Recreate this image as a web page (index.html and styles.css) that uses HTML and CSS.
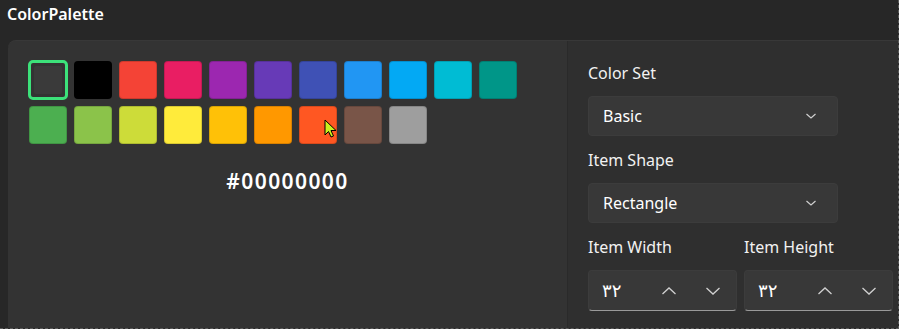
FILE: index.html
```html
<!DOCTYPE html>
<html lang="en">
<head>
    <meta charset="UTF-8">
    <title>ColorPalette</title>
    <link rel="stylesheet" href="styles.css">
</head>
<body>
    <div class="page">
        <div class="title">ColorPalette</div>
        <div class="card">
            <div class="left">
                <div class="swatches">
                    <div class="item selected"><span class="sw" style="background:#3a3a3a"></span></div>
                    <div class="item"><span class="sw" style="background:#000000"></span></div>
                    <div class="item"><span class="sw" style="background:#F44336"></span></div>
                    <div class="item"><span class="sw" style="background:#E91E63"></span></div>
                    <div class="item"><span class="sw" style="background:#9C27B0"></span></div>
                    <div class="item"><span class="sw" style="background:#673AB7"></span></div>
                    <div class="item"><span class="sw" style="background:#3F51B5"></span></div>
                    <div class="item"><span class="sw" style="background:#2196F3"></span></div>
                    <div class="item"><span class="sw" style="background:#03A9F4"></span></div>
                    <div class="item"><span class="sw" style="background:#00BCD4"></span></div>
                    <div class="item"><span class="sw" style="background:#009688"></span></div>
                    <div class="item"><span class="sw" style="background:#4CAF50"></span></div>
                    <div class="item"><span class="sw" style="background:#8BC34A"></span></div>
                    <div class="item"><span class="sw" style="background:#CDDC39"></span></div>
                    <div class="item"><span class="sw" style="background:#FFEB3B"></span></div>
                    <div class="item"><span class="sw" style="background:#FFC107"></span></div>
                    <div class="item"><span class="sw" style="background:#FF9800"></span></div>
                    <div class="item hover"><span class="sw" style="background:#FF5722"></span>
                        <svg class="cursor" width="14" height="22" viewBox="0 0 14 22">
                            <path d="M1 1 L1 16 L4.5 12.5 L7 18 L9.5 17 L7 11.5 L12 11.5 Z" fill="#c8f01e" stroke="#000" stroke-width="1" stroke-linejoin="round"/>
                        </svg>
                    </div>
                    <div class="item"><span class="sw" style="background:#795548"></span></div>
                    <div class="item"><span class="sw" style="background:#9E9E9E"></span></div>
                </div>
                <div class="hex">#00000000</div>
            </div>
            <div class="right">
                <div class="label">Color Set</div>
                <div class="combo">
                    <span>Basic</span>
                    <svg width="12" height="8" viewBox="0 0 12 8"><polyline points="1.5,2 6,6 10.5,2" fill="none" stroke="#d0d0d0" stroke-width="1.2"/></svg>
                </div>
                <div class="label">Item Shape</div>
                <div class="combo">
                    <span>Rectangle</span>
                    <svg width="12" height="8" viewBox="0 0 12 8"><polyline points="1.5,2 6,6 10.5,2" fill="none" stroke="#d0d0d0" stroke-width="1.2"/></svg>
                </div>
                <div class="pair">
                    <div class="col">
                        <div class="label">Item Width</div>
                        <div class="number">
                            <span class="val">۳۲</span>
                            <svg class="up" width="16" height="10" viewBox="0 0 16 10"><polyline points="1.5,8 8,2 14.5,8" fill="none" stroke="#d0d0d0" stroke-width="1.3"/></svg>
                            <svg width="16" height="10" viewBox="0 0 16 10"><polyline points="1.5,2 8,8 14.5,2" fill="none" stroke="#d0d0d0" stroke-width="1.3"/></svg>
                        </div>
                    </div>
                    <div class="col">
                        <div class="label">Item Height</div>
                        <div class="number">
                            <span class="val">۳۲</span>
                            <svg class="up" width="16" height="10" viewBox="0 0 16 10"><polyline points="1.5,8 8,2 14.5,8" fill="none" stroke="#d0d0d0" stroke-width="1.3"/></svg>
                            <svg width="16" height="10" viewBox="0 0 16 10"><polyline points="1.5,2 8,8 14.5,2" fill="none" stroke="#d0d0d0" stroke-width="1.3"/></svg>
                        </div>
                    </div>
                </div>
            </div>
        </div>
    </div>
</body>
</html>
```

FILE: styles.css
```css
*{margin: 0px;padding: 0px;box-sizing: border-box;}
body{
    background: #272727;
    color: #ffffff;
    font-family: "Noto Sans", "DejaVu Sans", sans-serif;
}
.page{
    width: 899px;
    height: 329px;
    padding-left: 8px;
    border-right: 1px dashed #5c5c5c;
    border-bottom: 1px dashed #5c5c5c;
    overflow: hidden;
}
.title{
    height: 40px;
    margin-left: -1px;
    padding-top: 2px;
    font-size: 16px;
    font-weight: 600;
    line-height: 24px;
}
.card{
    display: flex;
    height: 288px;
    background: #333333;
    border-radius: 8px 0 0 0;
    border-top: 1px solid #383838;
}
.left{
    width: 559px;
    padding: 19px 20px 0 20px;
}
.swatches{
    display: grid;
    grid-template-columns: repeat(11, 40px);
    gap: 5px;
}
.item{
    position: relative;
    width: 40px;
    height: 40px;
    padding: 1px;
}
.sw{
    display: block;
    width: 38px;
    height: 38px;
    border-radius: 4px;
    border: 1px solid rgba(0,0,0,0.15);
}
.selected{
    padding: 3px;
    border: 3px solid #3ce27a;
    border-radius: 5px;
}
.selected .sw{
    width: 28px;
    height: 28px;
    border: none;
    border-radius: 2px;
}
.cursor{
    position: absolute;
    left: 26px;
    top: 14px;
}
.hex{
    margin-top: 22px;
    text-align: center;
    font-size: 21px;
    font-weight: 600;
    letter-spacing: 1.4px;
    line-height: 28px;
}
.right{
    flex: 1;
    background: #2f2f2f;
    border-left: 1px solid #2a2a2a;
    padding: 22px 0 0 20px;
}
.label{
    font-size: 16px;
    line-height: 20px;
    color: #f2f2f2;
    margin-bottom: 13px;
}
.combo{
    width: 250px;
    height: 40px;
    background: #383838;
    border: 1px solid #3c3c3c;
    border-radius: 4px;
    display: flex;
    align-items: center;
    justify-content: space-between;
    padding: 0 20px 0 14px;
    font-size: 16px;
    margin-bottom: 14px;
}
.pair{
    display: flex;
    gap: 7px;
}
.col{
    width: 149px;
}
.number{
    height: 41px;
    background: #383838;
    border: 1px solid #3c3c3c;
    border-bottom: 1px solid #9a9a9a;
    border-radius: 4px;
    display: flex;
    align-items: center;
    padding: 0 15px 0 13px;
    font-family: "DejaVu Sans", sans-serif;
    font-size: 18px;
    letter-spacing: 1px;
}
.val{
    flex: 1;
}
.up{
    margin-right: 28px;
}
```
